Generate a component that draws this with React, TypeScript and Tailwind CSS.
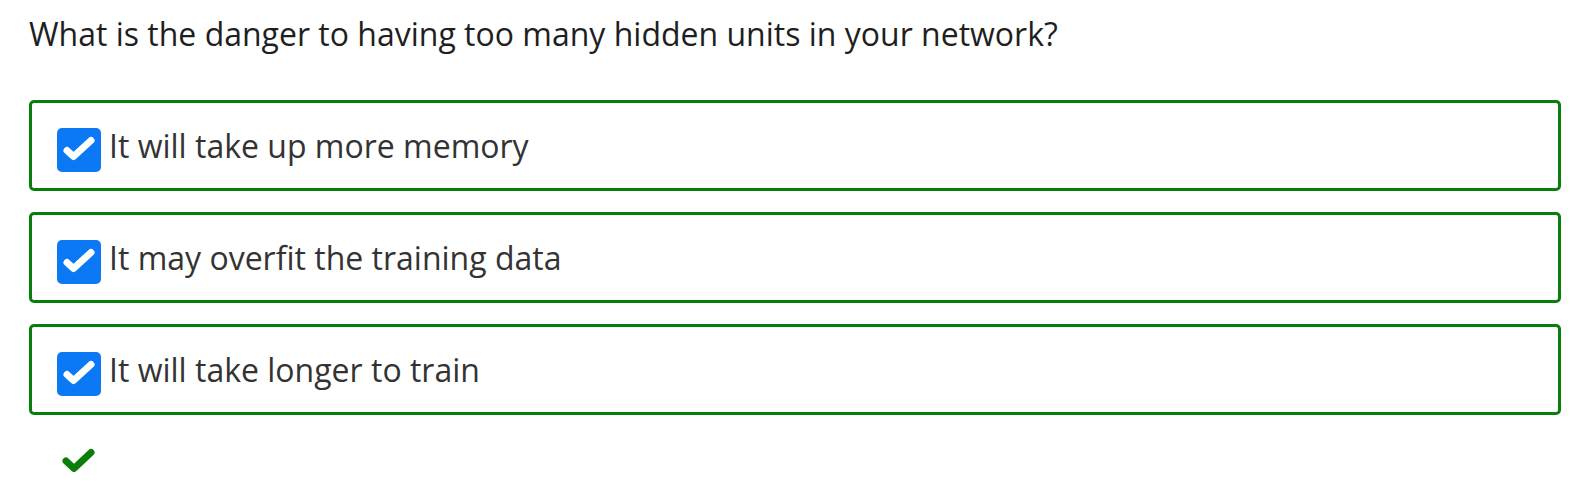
import React from "react";

const options = [
  "It will take up more memory",
  "It may overfit the training data",
  "It will take longer to train",
];

function CheckBox() {
  return (
    <div className="w-[44px] h-[44px] shrink-0 rounded-[5px] bg-[#0b78f5]">
      <svg width="44" height="44" viewBox="0 0 44 44">
        <path d="M10 22.5 L16.5 28.5 L34 12.5" fill="none" stroke="#fff" strokeWidth="7" strokeLinecap="round" strokeLinejoin="round" />
      </svg>
    </div>
  );
}

export default function App() {
  return (
    <div className="bg-white w-[1596px] h-[492px] pl-[29px] pr-[35px] pt-[12px] text-[#2b2b2b]" style={{ fontFamily: '"Open Sans", sans-serif' }}>
      <div className="text-[32px] leading-[44px] text-[#1f1f1f]">
        What is the danger to having too many hidden units in your network?
      </div>
      <div className="mt-[44px] flex flex-col gap-[21px]">
        {options.map((o) => (
          <div key={o} className="h-[91px] border-[3px] border-[#0a7e0a] rounded-[5px] flex items-start pt-[25px] pl-[25px]">
            <CheckBox />
            <span className="ml-[8px] text-[32px] leading-[36px] text-[#333]">{o}</span>
          </div>
        ))}
      </div>
      <div className="mt-[33px] ml-[31px]">
        <svg width="36" height="28" viewBox="0 0 36 28">
          <path d="M6 13 L14 20.5 L31 4.5" fill="none" stroke="#0a7e0a" strokeWidth="7" strokeLinecap="round" strokeLinejoin="round" />
        </svg>
      </div>
    </div>
  );
}
